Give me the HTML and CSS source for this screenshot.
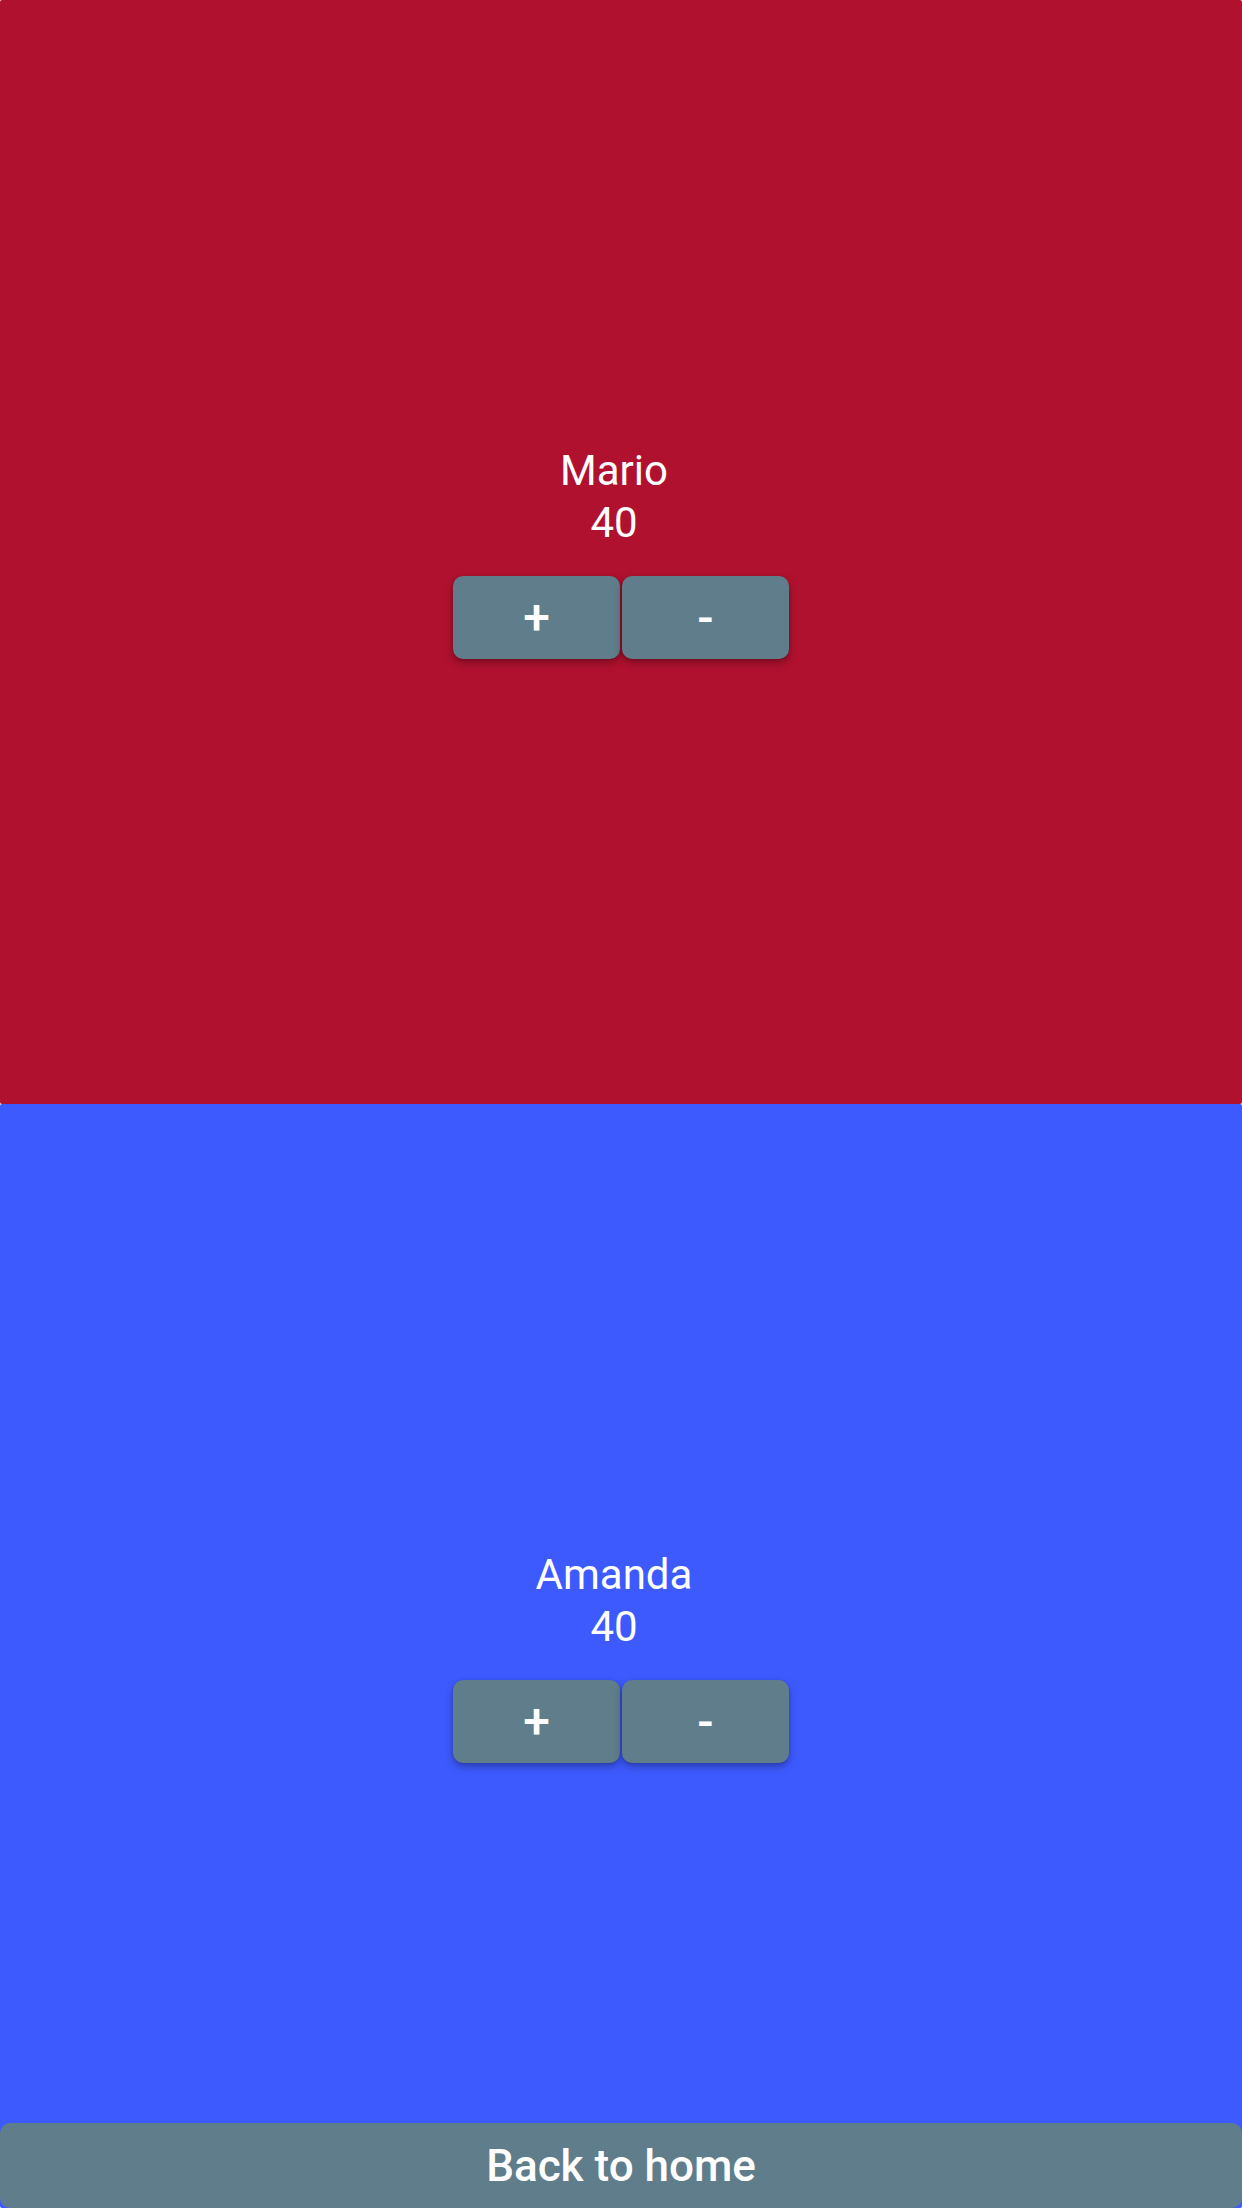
FILE: index.html
```html
<!DOCTYPE html>
<html>
<head>
<meta charset="utf-8">
<link rel="stylesheet" href="styles.css">
</head>
<body>
<main class="board">
  <section class="player player-red">
    <div class="player-info">
      <div class="player-name">Mario</div>
      <div class="player-score">40</div>
    </div>
    <div class="controls">
      <button class="ctrl">+</button>
      <button class="ctrl">-</button>
    </div>
  </section>
  <section class="player player-blue">
    <div class="player-info">
      <div class="player-name">Amanda</div>
      <div class="player-score">40</div>
    </div>
    <div class="controls">
      <button class="ctrl">+</button>
      <button class="ctrl">-</button>
    </div>
  </section>
</main>
<button class="back">Back to home</button>
</body>
</html>
```
FILE: styles.css
```css
html, body {
  margin: 0;
  padding: 0;
  background: #ffffff;
}
body {
  font-family: Roboto, "Noto Sans", sans-serif;
  color: #ffffff;
}
.board {
  height: 2208px;
  display: flex;
  flex-direction: column;
}
.player {
  flex: 1;
  display: flex;
  flex-direction: column;
  align-items: center;
  justify-content: center;
  border-radius: 2px;
}
.player-red {
  background: #b0112f;
}
.player-blue {
  background: #3d5afe;
}
.player-info {
  display: flex;
  flex-direction: column;
  align-items: center;
  padding-right: 14px;
}
.player-name,
.player-score {
  font-size: 42px;
  line-height: 52px;
}
.controls {
  display: flex;
  gap: 2px;
  margin-top: 27px;
}
.ctrl {
  width: 167px;
  height: 83px;
  border: none;
  border-radius: 10px;
  background: #607d8b;
  color: #ffffff;
  font-family: Roboto, "Noto Sans", sans-serif;
  font-size: 48px;
  font-weight: 500;
  padding: 0;
  box-shadow: 0 4px 8px rgba(0, 0, 0, 0.28), 0 1px 3px rgba(0, 0, 0, 0.15);
}
.back {
  position: fixed;
  left: 0;
  right: 0;
  bottom: 0;
  width: 100%;
  height: 85px;
  border: none;
  border-radius: 10px;
  background: #607d8b;
  color: #ffffff;
  font-family: Roboto, "Noto Sans", sans-serif;
  font-size: 44px;
  font-weight: 500;
  padding: 0;
}
```
